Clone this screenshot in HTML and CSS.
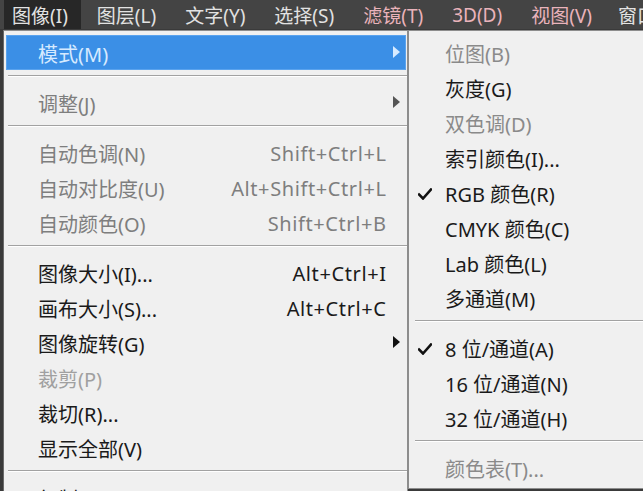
FILE: index.html
```html
<!DOCTYPE html>
<html lang="zh-CN">
<head>
<meta charset="utf-8">
<title>图像菜单</title>
<link rel="stylesheet" href="styles.css">
</head>
<body>
<div class="menubar">
  <span class="top-item active">图像(I)</span>
  <span class="top-item">图层(L)</span>
  <span class="top-item">文字(Y)</span>
  <span class="top-item">选择(S)</span>
  <span class="top-item tint">滤镜(T)</span>
  <span class="top-item tint">3D(D)</span>
  <span class="top-item tint">视图(V)</span>
  <span class="top-item">窗口(W)</span>
</div>
<div class="stage">
  <div class="menu main">
    <div class="row hl"><span class="label">模式(M)</span><span class="key"></span><span class="arrow"></span></div>
    <div class="sep"></div>
    <div class="row dis"><span class="label">调整(J)</span><span class="key"></span><span class="arrow"></span></div>
    <div class="sep"></div>
    <div class="row dis"><span class="label">自动色调(N)</span><span class="key">Shift+Ctrl+L</span><span class="noarrow"></span></div>
    <div class="row dis"><span class="label">自动对比度(U)</span><span class="key">Alt+Shift+Ctrl+L</span><span class="noarrow"></span></div>
    <div class="row dis"><span class="label">自动颜色(O)</span><span class="key">Shift+Ctrl+B</span><span class="noarrow"></span></div>
    <div class="sep"></div>
    <div class="row"><span class="label">图像大小(I)...</span><span class="key">Alt+Ctrl+I</span><span class="noarrow"></span></div>
    <div class="row"><span class="label">画布大小(S)...</span><span class="key">Alt+Ctrl+C</span><span class="noarrow"></span></div>
    <div class="row"><span class="label">图像旋转(G)</span><span class="key"></span><span class="arrow"></span></div>
    <div class="row dim"><span class="label">裁剪(P)</span><span class="key"></span><span class="noarrow"></span></div>
    <div class="row"><span class="label">裁切(R)...</span><span class="key"></span><span class="noarrow"></span></div>
    <div class="row"><span class="label">显示全部(V)</span><span class="key"></span><span class="noarrow"></span></div>
    <div class="sep"></div>
    <div class="row"><span class="label">复制(D)...</span><span class="key"></span><span class="noarrow"></span></div>
  </div>
  <div class="menu sub">
    <div class="srow dis"><span class="check"></span><span class="label">位图(B)</span></div>
    <div class="srow"><span class="check"></span><span class="label">灰度(G)</span></div>
    <div class="srow dis"><span class="check"></span><span class="label">双色调(D)</span></div>
    <div class="srow"><span class="check"></span><span class="label">索引颜色(I)...</span></div>
    <div class="srow"><span class="check"><svg class="tick" viewBox="0 0 14 12"><path d="M1 6.5 L5 10.5 L13 1.5" /></svg></span><span class="label">RGB 颜色(R)</span></div>
    <div class="srow"><span class="check"></span><span class="label">CMYK 颜色(C)</span></div>
    <div class="srow"><span class="check"></span><span class="label">Lab 颜色(L)</span></div>
    <div class="srow"><span class="check"></span><span class="label">多通道(M)</span></div>
    <div class="ssep"></div>
    <div class="srow"><span class="check"><svg class="tick" viewBox="0 0 14 12"><path d="M1 6.5 L5 10.5 L13 1.5" /></svg></span><span class="label">8 位/通道(A)</span></div>
    <div class="srow"><span class="check"></span><span class="label">16 位/通道(N)</span></div>
    <div class="srow"><span class="check"></span><span class="label">32 位/通道(H)</span></div>
    <div class="ssep"></div>
    <div class="srow dis"><span class="check"></span><span class="label">颜色表(T)...</span></div>
  </div>
</div>
</body>
</html>
```

FILE: styles.css
```css
html, body {
  margin: 0;
  padding: 0;
}

body {
  width: 643px;
  height: 491px;
  overflow: hidden;
  background: #3a3a3a;
  font-family: "Noto Sans", "Noto Sans CJK SC", sans-serif;
  font-size: 20px;
}

.menubar {
  height: 30px;
  display: flex;
  align-items: stretch;
  background: #444444;
  color: #e2e2e2;
  font-size: 19px;
  padding-left: 4px;
  white-space: nowrap;
  overflow: hidden;
  border-bottom: 1px solid #3a3a3a;
  box-sizing: border-box;
}

.top-item {
  display: flex;
  align-items: center;
  padding: 0 13px 0 8px;
  margin-right: 8px;
}

.top-item:nth-child(7) {
  margin-right: 5px;
}

.top-item.active {
  background: #272727;
}

.top-item.tint {
  color: #eab3bb;
}

.stage {
  position: relative;
}

.menu {
  background: #f0f0f0;
  box-sizing: border-box;
}

.main {
  margin-left: 3px;
  width: 405px;
  border: 1px solid #8d8d8d;
  border-left: 1px solid #6a6a6a;
  padding: 4px 0 4px 0;
  color: #1a1a1a;
}

.row {
  display: grid;
  grid-template-columns: 1fr auto 20px;
  align-items: center;
  height: 35px;
  margin: 0 1px 0 2px;
  padding-left: 32px;
  box-sizing: border-box;
  padding-top: 2px;
}

.row.hl {
  background: #3b8fe6;
  color: #d6eaff;
  box-shadow: inset 0 0 0 1px #5aa3ee;
}

.row.dis {
  color: #7e7e7e;
}

.row.dim {
  color: #a0a0a0;
}

.key {
  text-align: right;
  white-space: nowrap;
  letter-spacing: 0.6px;
  margin-right: -0.6px;
}

.arrow {
  justify-self: end;
  margin-right: 6px;
  width: 0;
  height: 0;
  border-top: 6px solid transparent;
  border-bottom: 6px solid transparent;
  border-left: 7px solid #111;
  margin-top: -3px;
}

.row.hl .arrow {
  border-left-color: #d6eaff;
}

.row.dis .arrow {
  border-left-color: #555;
}

.sep {
  height: 15px;
  box-sizing: border-box;
  padding-top: 5px;
  margin-left: 4px;
}

.sep::before {
  content: "";
  display: block;
  height: 1px;
  background: #a2a2a2;
  border-bottom: 1px solid #ffffff;
}

.sub {
  position: absolute;
  left: 408px;
  top: 0;
  width: 250px;
  border: 1px solid #8d8d8d;
  padding: 4px 0 3px 0;
  color: #1a1a1a;
}

.srow {
  display: flex;
  align-items: center;
  height: 35px;
  padding-top: 2px;
  box-sizing: border-box;
}

.srow.dis {
  color: #8a8a8a;
}

.check {
  width: 36px;
  flex: none;
  display: flex;
  align-items: center;
  padding-left: 9px;
  box-sizing: border-box;
}

.tick {
  width: 14px;
  height: 12px;
  fill: none;
  stroke: #111;
  stroke-width: 2.6;
  stroke-linecap: square;
}

.ssep {
  height: 15px;
  box-sizing: border-box;
  padding-top: 5px;
  margin-left: 6px;
  margin-right: 11px;
}

.ssep::before {
  content: "";
  display: block;
  height: 1px;
  background: #a2a2a2;
  border-bottom: 1px solid #ffffff;
}
```
